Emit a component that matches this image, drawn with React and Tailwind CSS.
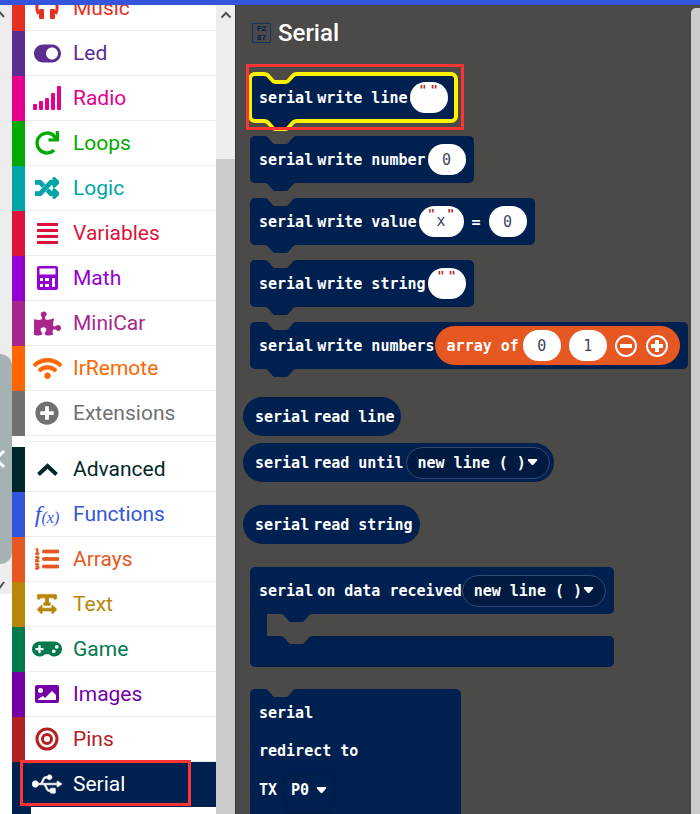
import React from "react";
import {
  FaToggleOn, FaRedo, FaRandom, FaPuzzlePiece,
  FaWifi, FaPlusCircle, FaListOl, FaTextWidth, FaGamepad, FaUsb,
} from "react-icons/fa";

const Headphones = () => (
  <svg width="24" height="24" viewBox="0 0 24 24" fill="currentColor">
    <path d="M3.500 18C0 11 2 2.500 12 2.500S24 11 20.500 18" fill="none" stroke="currentColor" strokeWidth="3" />
    <rect x="4" y="13" width="5" height="10" rx="1" />
    <rect x="15" y="13" width="5" height="10" rx="1" />
  </svg>
);

const Signal = () => (
  <svg width="28" height="24" viewBox="0 0 28 24" fill="currentColor">
    <rect y="18" width="4" height="6" rx="1" />
    <rect x="6" y="15" width="4" height="9" rx="1" />
    <rect x="12" y="12" width="4" height="12" rx="1" />
    <rect x="18" y="7" width="4" height="17" rx="1" />
    <rect x="24" width="4" height="24" rx="1" />
  </svg>
);

const Bars = () => (
  <svg width="21" height="21" viewBox="0 0 21 21" fill="currentColor">
    <path d="M0 0h21v3H0zM0 6h21v3H0zM0 12h21v3H0zM0 18h21v3H0z" />
  </svg>
);

const Calculator = () => (
  <svg width="21" height="24" viewBox="0 0 21 24" fill="currentColor" fillRule="evenodd">
    <path d="M2 0h17a2 2 0 0 1 2 2v20a2 2 0 0 1-2 2H2a2 2 0 0 1-2-2V2a2 2 0 0 1 2-2zM2.500 2.500v6h16v-6zM3 12v3h3v-3zM8 12v3h4v-3zM15 12v9h3v-9zM3 18v3h3v-3zM8 18v3h4v-3z" />
  </svg>
);

const Picture = () => (
  <svg width="24" height="18" viewBox="0 0 24 18" fill="currentColor" fillRule="evenodd">
    <path d="M2 0h20a2 2 0 0 1 2 2v14a2 2 0 0 1-2 2H2a2 2 0 0 1-2-2V2a2 2 0 0 1 2-2zM5.500 3a2.500 2.500 0 1 0 0 5a2.500 2.500 0 1 0 0-5zM3 15h18v-5l-4-4-7 7-2-2-5 3z" />
  </svg>
);

const Target = () => (
  <svg width="24" height="24" viewBox="0 0 24 24" fill="none" stroke="currentColor" strokeWidth="3">
    <circle cx="12" cy="12" r="10" />
    <circle cx="12" cy="12" r="4.500" />
  </svg>
);

const ChevronUp = () => (
  <svg width="21" height="13" viewBox="0 0 21 13" fill="none" stroke="currentColor" strokeWidth="4">
    <path d="M1.500 11.500 10.500 3l9 8.500" />
  </svg>
);

const Fx = () => (
  <span className="flex items-end font-['Liberation_Serif',serif] italic" aria-hidden="true">
    <span className="text-2xl leading-6">f</span>
    <span className="text-base leading-4">(x)</span>
  </span>
);

const basic = [
  { name: "Music", bar: "bg-[#e63022]", text: "text-[#e63022]", icon: <Headphones /> },
  { name: "Led", bar: "bg-[#5c2d91]", text: "text-[#5c2d91]", icon: <FaToggleOn size={27} /> },
  { name: "Radio", bar: "bg-[#e3008c]", text: "text-[#e3008c]", icon: <Signal /> },
  { name: "Loops", bar: "bg-[#00aa00]", text: "text-[#00aa00]", icon: <FaRedo size={24} /> },
  { name: "Logic", bar: "bg-[#00a4a6]", text: "text-[#00a4a6]", icon: <FaRandom size={24} strokeWidth={24} stroke="currentColor" /> },
  { name: "Variables", bar: "bg-[#dc143c]", text: "text-[#dc143c]", icon: <Bars /> },
  { name: "Math", bar: "bg-[#9400d3]", text: "text-[#9400d3]", icon: <Calculator /> },
  { name: "MiniCar", bar: "bg-[#a9278c]", text: "text-[#a9278c]", icon: <FaPuzzlePiece size={27} /> },
  { name: "IrRemote", bar: "bg-[#ff6600]", text: "text-[#ff6600]", icon: <FaWifi size={29} strokeWidth={16} stroke="currentColor" /> },
  { name: "Extensions", bar: "bg-[#717171]", text: "text-[#717171]", icon: <FaPlusCircle size={24} /> },
];

const advanced = [
  { name: "Advanced", bar: "bg-[#00272b]", text: "text-[#00272b]", icon: <ChevronUp /> },
  { name: "Functions", bar: "bg-[#3455db]", text: "text-[#3455db]", icon: <Fx /> },
  { name: "Arrays", bar: "bg-[#e65722]", text: "text-[#e65722]", icon: <FaListOl size={24} strokeWidth={16} stroke="currentColor" /> },
  { name: "Text", bar: "bg-[#b8860b]", text: "text-[#b8860b]", icon: <FaTextWidth size={22} strokeWidth={16} stroke="currentColor" /> },
  { name: "Game", bar: "bg-[#007a4b]", text: "text-[#007a4b]", icon: <FaGamepad size={30} /> },
  { name: "Images", bar: "bg-[#7600a8]", text: "text-[#7600a8]", icon: <Picture /> },
  { name: "Pins", bar: "bg-[#b22222]", text: "text-[#b22222]", icon: <Target /> },
  { name: "Serial", bar: "bg-[#002050]", text: "text-white", icon: <FaUsb size={30} strokeWidth={12} stroke="currentColor" />, selected: true },
];

function Category({ item }) {
  return (
    <li className="relative">
      <button type="button" className={`flex h-[45px] w-full items-stretch text-left ${item.text}`}>
        <span className={`w-[13px] shrink-0 ${item.bar}`} />
        <span className={`flex flex-1 items-center border-b ${item.selected ? "border-[#002050] bg-[#002050]" : "border-[#e8eeef] bg-white"}`}>
          <span className="ml-[6px] flex w-8 justify-center">{item.icon}</span>
          <span className="ml-[10px] text-[21px] leading-6">{item.name}</span>
        </span>
      </button>
      {item.selected && <span className="pointer-events-none absolute -top-[2px] left-2 h-[46px] w-[171px] border-3 border-[#fb3434]" />}
    </li>
  );
}

/* Connector outline shared by the notch of a block and the tab under it. */
const connector = "M0 0C2 0 3 .5 4 1.500L8 6C9 7.500 10 8 11 8H22C23 8 24 7.500 25 6L29 1.500C30 .5 31 0 33 0";

function Connector({ className, color, outline }) {
  return (
    <svg className={`absolute overflow-visible ${className}`} width="33" height="8" viewBox="0 0 33 8" aria-hidden="true">
      <path d={connector} fill={color} />
      <path d="M0 0V-3H33V0Z" fill={color} />
      {outline && <path d={connector} fill="none" stroke="#fff200" strokeWidth="4" />}
    </svg>
  );
}

function Statement({ children, selected }) {
  return (
    <div className={`relative flex h-[47px] w-fit items-center rounded-[5px] bg-[#002050] pr-2 pl-[9px] ${selected ? "outline-4 -outline-offset-2 outline-[#fff200]" : ""}`}>
      <Connector className="top-0 left-[14px]" color="#4c4949" outline={selected} />
      {children}
      <Connector className="top-full left-[14px]" color="#002050" outline={selected} />
    </div>
  );
}

function Reporter({ children }) {
  return <div className="-ml-[7px] flex h-[39px] w-fit items-center rounded-full bg-[#002050] pr-1 pl-3">{children}</div>;
}

const Words = ({ children }) => (
  <>
    <span>serial</span>
    <span className="ml-1">{children}</span>
  </>
);

const NumberField = ({ value, label, className = "" }) => (
  <input
    aria-label={label}
    defaultValue={value}
    className={`h-[31px] w-[38px] rounded-full bg-white text-center font-normal text-[#41465f] outline-none ${className}`}
  />
);

function StringField({ value = "", label, wide }) {
  return (
    <label className={`ml-[2px] flex h-[31px] justify-center rounded-full bg-white text-xs font-bold text-[#b01c1c] ${wide ? "w-[45px]" : "w-[38px]"}`}>
      <span className="leading-4">"</span>
      <input
        aria-label={label}
        defaultValue={value}
        className={`bg-transparent text-center text-[15px] font-normal text-[#41465f] outline-none ${wide ? "w-3" : "w-1"}`}
      />
      <span className="leading-4">"</span>
    </label>
  );
}

const Caret = ({ className }) => (
  <svg className={`pointer-events-none absolute ${className}`} width="11" height="7" viewBox="0 0 12 8" fill="#fff" aria-hidden="true">
    <path d="M1 0H11Q12 .5 11 2L7 6.500Q6 7.500 5 6.500L1 2Q0 .5 1 0Z" />
  </svg>
);

function Delimiter({ label }) {
  return (
    <span className="relative flex items-center">
      <select aria-label={label} className="h-8 w-[144px] appearance-none rounded-full border border-[#33496f] bg-[#001a42] pl-[11px] text-white outline-none">
        <option>new line ( )</option>
      </select>
      <Caret className="right-3" />
    </span>
  );
}

function PinSelect({ label, value }) {
  return (
    <span className="relative ml-[7px] flex items-center">
      <select aria-label={label} className="h-8 w-[51px] appearance-none rounded border border-[#001a42] bg-[#002050] pl-[6px] text-white outline-none">
        <option>{value}</option>
      </select>
      <Caret className="right-2" />
    </span>
  );
}

function RoundButton({ label, d }) {
  return (
    <button type="button" aria-label={label}>
      <svg width="22" height="22" viewBox="0 0 22 22" fill="none" stroke="#fff">
        <circle cx="11" cy="11" r="10" strokeWidth="2" />
        <path d={d} strokeWidth="4" />
      </svg>
    </button>
  );
}

function Flyout() {
  return (
    <main className="min-w-0 flex-1 overflow-hidden border-l border-[#383636] bg-[#4c4949] pl-[14px] font-['DejaVu_Sans_Mono',monospace] text-[15px] leading-5 font-bold whitespace-nowrap text-white">
      <header className="mt-3 flex h-8 items-center gap-[7px] pl-[2px]">
        <span className="flex h-5 w-[19px] flex-col items-center justify-center border border-[#143463] font-['Liberation_Mono',monospace] text-[8px] leading-[9px] text-[#002050]" aria-hidden="true">
          <span>F2</span>
          <span>87</span>
        </span>
        <h1 className="font-[Roboto,sans-serif] text-2xl font-medium">Serial</h1>
      </header>

      <div className="mt-[25px] flex flex-col gap-[15px]">
        <div className="relative">
          <Statement selected>
            <Words>write line</Words>
            <StringField label="Line" />
          </Statement>
          <span className="pointer-events-none absolute -top-[10px] -left-1 z-10 h-[66px] w-[218px] border-3 border-[#fb3434]" />
        </div>
        <Statement>
          <Words>write number</Words>
          <NumberField label="Number" value="0" className="ml-[2px]" />
        </Statement>
        <Statement>
          <Words>write value</Words>
          <StringField label="Name" value="x" wide />
          <span className="mx-2">=</span>
          <NumberField label="Value" value="0" />
        </Statement>
        <Statement>
          <Words>write string</Words>
          <StringField label="String" />
        </Statement>
        <Statement>
          <Words>write numbers</Words>
          <div className="flex h-[39px] items-center rounded-full bg-[#e65722] px-3">
            <span>array of</span>
            <NumberField label="First item" value="0" className="ml-1" />
            <NumberField label="Second item" value="1" className="mx-2" />
            <span className="flex gap-[9px]">
              <RoundButton label="Remove item" d="M5 11H17" />
              <RoundButton label="Add item" d="M5 11H17M11 5V17" />
            </span>
          </div>
        </Statement>
      </div>

      <div className="mt-7 flex flex-col gap-[7px]">
        <Reporter><Words>read line</Words><span className="w-[3px]" /></Reporter>
        <Reporter>
          <Words>read until</Words>
          <span className="ml-[2px]"><Delimiter label="Read until delimiter" /></span>
        </Reporter>
      </div>
      <div className="mt-[23px]">
        <Reporter><Words>read string</Words><span className="w-[3px]" /></Reporter>
      </div>

      <div className="mt-[23px] w-fit">
        <div className="flex h-[47px] items-center rounded-t-[5px] rounded-br-[5px] bg-[#002050] pr-2 pl-[9px]">
          <Words>on data received</Words>
          <Delimiter label="Data received delimiter" />
        </div>
        <div className="relative h-[22px] w-[17px] bg-[#002050]">
          <Connector className="top-0 left-[30px]" color="#002050" />
        </div>
        <div className="relative h-[31px] rounded-tr-[5px] rounded-b-[5px] bg-[#002050]">
          <Connector className="top-0 left-[30px]" color="#4c4949" />
        </div>
      </div>

      <div className="relative mt-[22px] flex h-[200px] w-[211px] flex-col rounded-[5px] bg-[#002050] pt-[14px] pl-[9px]">
        <Connector className="top-0 left-[14px]" color="#4c4949" />
        <span className="mb-[18px]">serial</span>
        <span className="mb-[13px]">redirect to</span>
        <div className="mb-[7px] flex items-center">TX<PinSelect label="TX pin" value="P0" /></div>
        <div className="ml-[25px] h-8 w-[51px] rounded border border-[#001a42]" />
      </div>
    </main>
  );
}

export default function App() {
  return (
    <div className="flex h-screen flex-col overflow-hidden bg-white font-[Roboto,sans-serif]">
      <div className="h-[5px] shrink-0 bg-[#3455db]" />
      <div className="flex min-h-0 flex-1">
        <aside className="flex w-3 shrink-0 flex-col overflow-hidden">
          <div className="flex h-[589px] flex-col items-start bg-[#ededed]">
            <svg className="mt-1 h-3 w-2" viewBox="0 0 8 12" fill="none" stroke="#505050" strokeWidth="2"><path d="M-4 8 0 3.500 4 8" /></svg>
            <div className="mt-[333px] flex h-[210px] w-full items-center rounded-tr-[12px] rounded-br-[12px] bg-[#a5b1b3]">
              <svg className="h-5 w-2" viewBox="0 0 8 20" fill="none" stroke="#fff" strokeWidth="3"><path d="M4 2-4 10 4 18" /></svg>
            </div>
            <svg className="mt-[15px] h-3 w-2" viewBox="0 0 8 12" fill="none" stroke="#505050" strokeWidth="2"><path d="M-4 4 0 8.500 4 3" /></svg>
          </div>
        </aside>
        <nav className="w-[204px] shrink-0 overflow-hidden" aria-label="Block categories">
          <ul className="-mt-[19px]">
            {basic.map((item) => <Category key={item.name} item={item} />)}
          </ul>
          <div className="mt-[5px] ml-[13px] border-t border-[#e8eeef]" />
          <ul className="mt-[5px]">
            {advanced.map((item) => <Category key={item.name} item={item} />)}
          </ul>
          <div className="h-10 w-[19px] bg-[#002050]" />
        </nav>
        <div className="flex w-[19px] shrink-0 flex-col bg-[#ededed]">
          <div className="flex h-[154px] justify-center pt-1">
            <svg width="12" height="12" viewBox="0 0 12 12" fill="none" stroke="#505050" strokeWidth="2"><path d="M1.500 8.500 6 4l4.500 4.500" /></svg>
          </div>
          <div className="flex-1 bg-[#cbcbcb]" />
        </div>
        <Flyout />
        <div className="w-[9px] shrink-0 bg-[#4c4949] pt-[3px]">
          <div className="h-full rounded-tl-[5px] bg-[#cbcbcb]" />
        </div>
      </div>
    </div>
  );
}
